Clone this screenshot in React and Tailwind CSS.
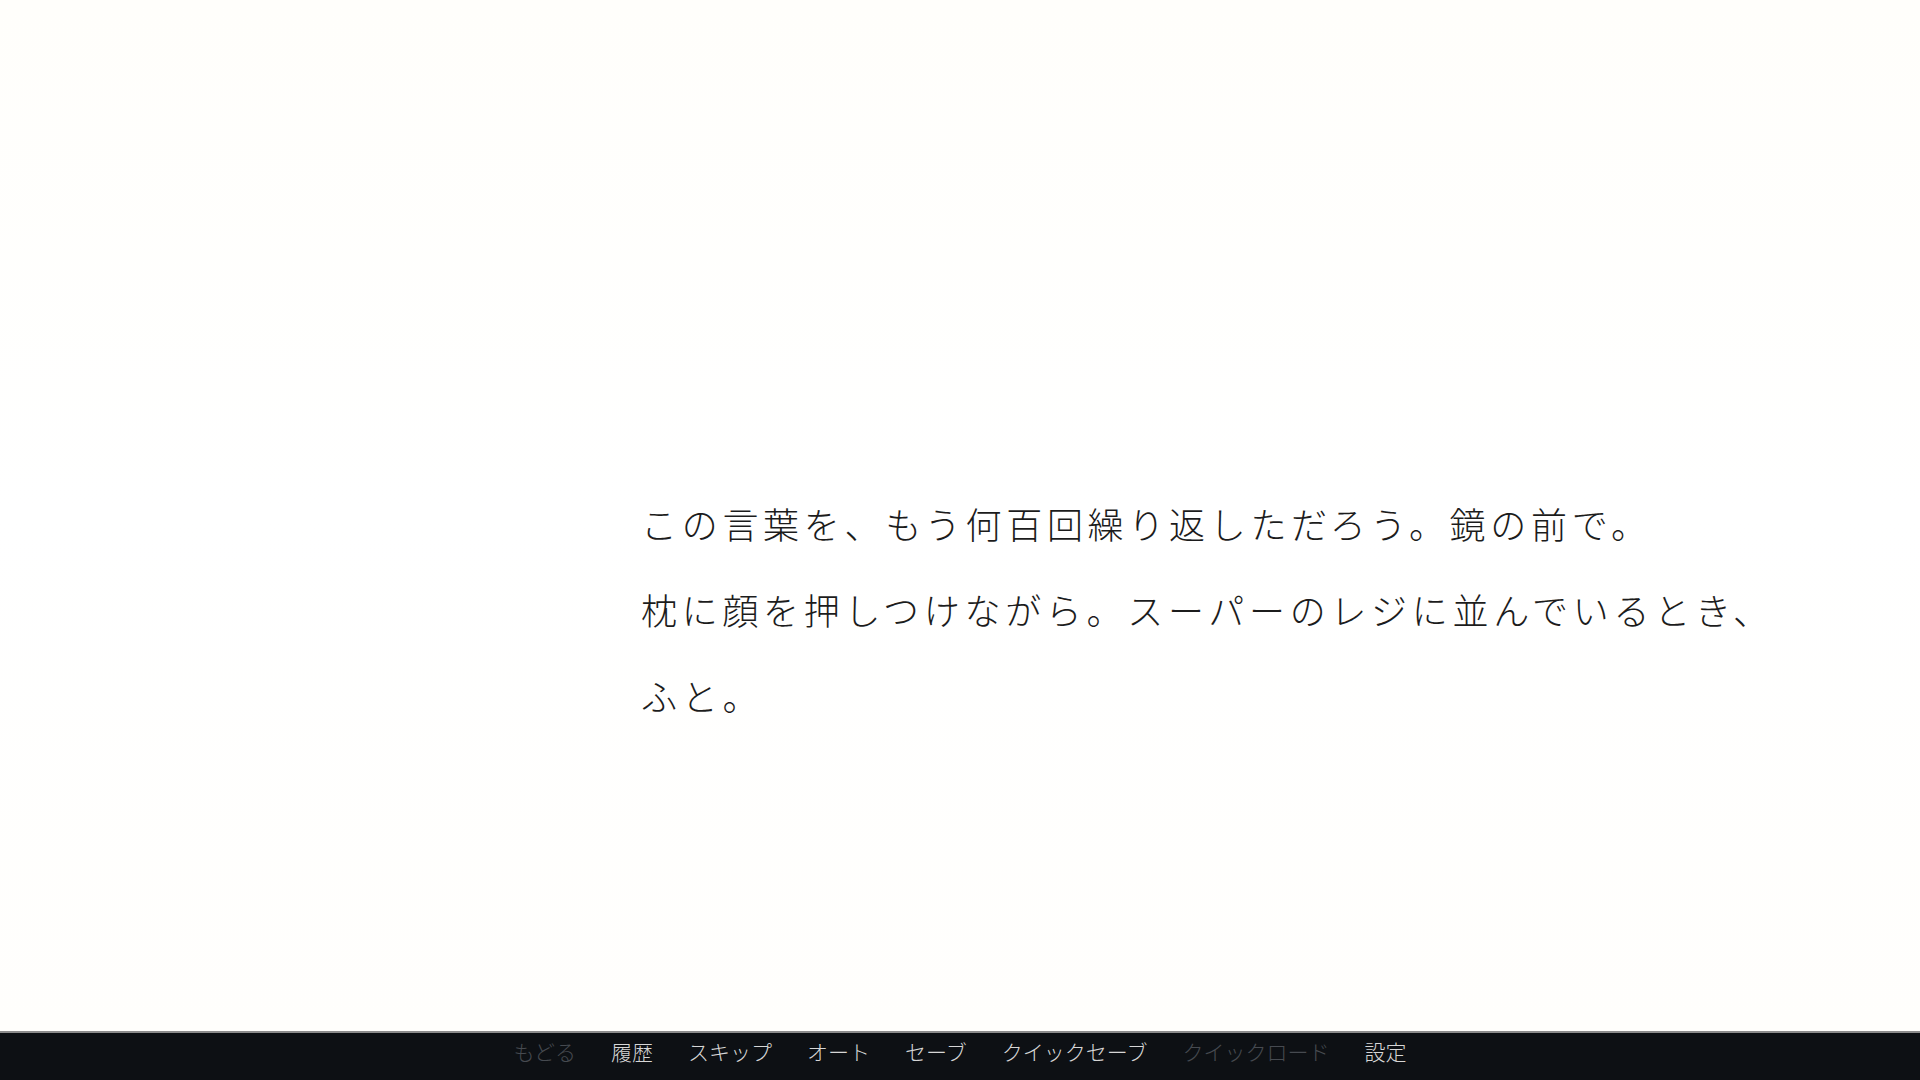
const lines = [
  "この言葉を、もう何百回繰り返しただろう。鏡の前で。",
  "枕に顔を押しつけながら。スーパーのレジに並んでいるとき、",
  "ふと。",
];

const menu = [
  { label: "もどる", disabled: true },
  { label: "履歴" },
  { label: "スキップ" },
  { label: "オート" },
  { label: "セーブ" },
  { label: "クイックセーブ" },
  { label: "クイックロード", disabled: true },
  { label: "設定" },
];

export default function App() {
  return (
    <div
      className="h-screen w-full flex flex-col bg-white overflow-hidden"
      style={{ fontFamily: '"Noto Sans CJK JP", "Noto Sans", sans-serif' }}
    >
      {/* Message window */}
      <div className="flex-1 bg-gradient-to-b from-[#fffefb] via-white to-[#fffefc]">
        <div className="pl-[641px] pt-[480px] text-[#1c1c1c] text-[36px] leading-[86px] tracking-[4.7px] font-light">
          {lines.map((line) => (
            <p key={line}>{line}</p>
          ))}
        </div>
      </div>

      {/* Quick menu */}
      <div className="h-[49px] pb-[9px] bg-[#0d1014] border-t-2 border-[#8c8c8c] flex items-center justify-center gap-[35px] text-[21px] font-light">
        {menu.map((item) => (
          <button
            key={item.label}
            className={
              item.disabled
                ? "text-[#464a50] cursor-default"
                : "text-[#d6d6d6] hover:text-white cursor-pointer"
            }
          >
            {item.label}
          </button>
        ))}
      </div>
    </div>
  );
}
